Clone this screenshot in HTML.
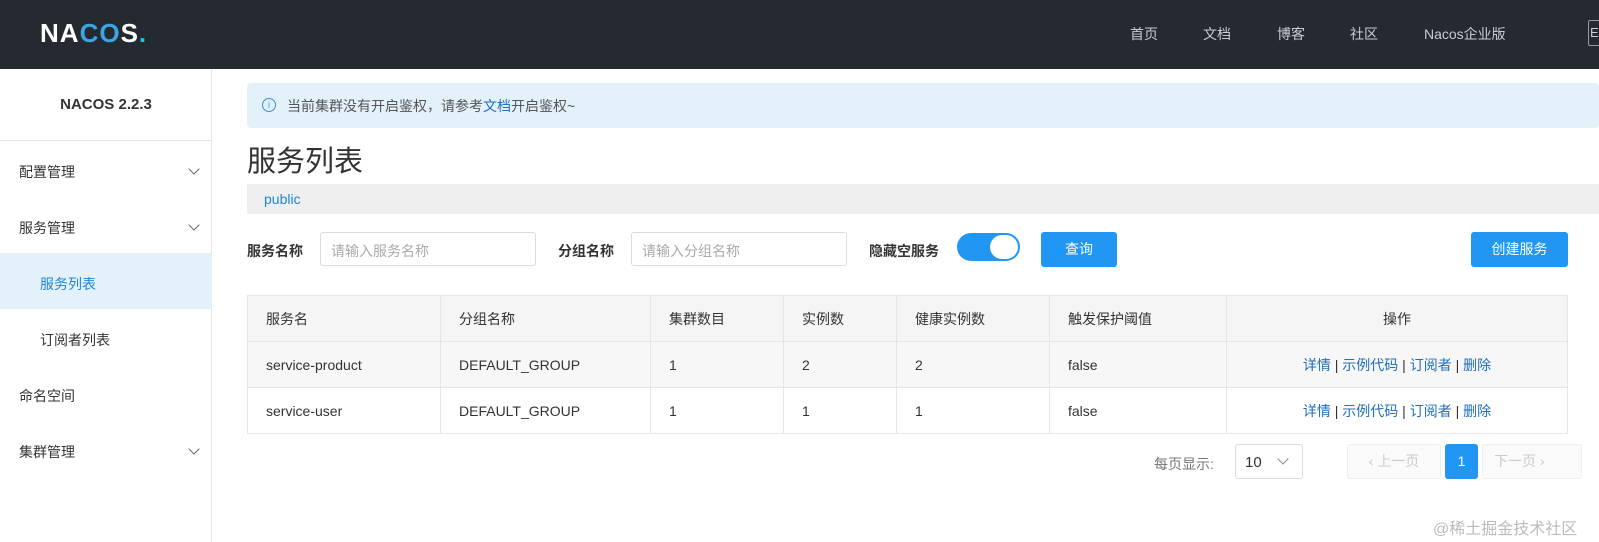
<!DOCTYPE html><html><head><meta charset="utf-8"><style>
*{box-sizing:border-box;margin:0;padding:0}
body{width:1599px;height:542px;overflow:hidden;background:#fff;font-family:"Liberation Sans","Noto Sans CJK SC",sans-serif;font-size:14px;color:#333;position:relative}
.a{position:absolute}
.hdr{left:0;top:0;width:1599px;height:69px;background:#252a31}
.nav{top:24px;color:#c9cbce;font-size:14px}
.side{left:0;top:69px;width:212px;height:473px;border-right:1px solid #e6e6e6}
.mi{left:19px;font-size:14px;color:#333}
.chev{position:absolute;width:8px;height:8px;border-right:1.3px solid #666;border-bottom:1.3px solid #666;transform:rotate(45deg)}
.inp{height:34px;border:1px solid #dcdcdc;border-radius:3px;color:#aaa;padding:8px 10px;font-size:14px}
.lbl{font-size:14px;color:#333;font-weight:bold}
table{border-collapse:collapse;position:absolute;left:247px;top:295px;width:1321px}
td{border:1px solid #e6e6e6;height:46px;padding-left:18px;font-size:14px;color:#333}
tr.h td{background:#f5f5f5}
tr.g td{background:#f7f7f7}
.op{color:#1f6ebd;text-align:center;padding:0}
.op span{color:#333}
</style></head><body>
<div class="a hdr"></div>
<div class="a" style="left:40px;top:18px;color:#fff;font-size:26px;font-weight:bold;letter-spacing:1px">NA<span style="color:#3aa6e6">CO</span>S<span style="color:#21c0e8">.</span></div>
<div class="a nav" style="left:1130px">首页</div>
<div class="a nav" style="left:1203px">文档</div>
<div class="a nav" style="left:1277px">博客</div>
<div class="a nav" style="left:1350px">社区</div>
<div class="a nav" style="left:1424px">Nacos企业版</div>
<div class="a" style="left:1588px;top:20px;width:14px;height:26px;border:1px solid #999;border-radius:2px;color:#ccc;font-size:13px;padding:4px 1px">E</div>
<div class="a side"></div>
<div class="a" style="left:0;top:96px;width:212px;text-align:center;font-weight:bold;font-size:15px;color:#333">NACOS 2.2.3</div>
<div class="a" style="left:0;top:140px;width:212px;border-top:1px solid #e6e6e6"></div>
<div class="a mi" style="top:162px">配置管理</div><div class="chev" style="left:190px;top:165px"></div>
<div class="a mi" style="top:218px">服务管理</div><div class="chev" style="left:190px;top:221px"></div>
<div class="a" style="left:0;top:253px;width:212px;height:56px;background:#e3f1fb"></div>
<div class="a mi" style="left:40px;top:274px;color:#1f86d6">服务列表</div>
<div class="a mi" style="left:40px;top:330px">订阅者列表</div>
<div class="a mi" style="top:386px">命名空间</div>
<div class="a mi" style="top:442px">集群管理</div><div class="chev" style="left:190px;top:445px"></div>
<div class="a" style="left:247px;top:83px;width:1352px;height:45px;background:#e3f1fb;border-radius:4px"></div>
<div class="a" style="left:262px;top:98px;width:14px;height:14px;border:1.3px solid #3b8fd9;border-radius:50%;color:#3b8fd9;font-size:9px;text-align:center;line-height:12px">i</div>
<div class="a" style="left:287px;top:96px;color:#555">当前集群没有开启鉴权，请参考<span style="color:#1f6ebd">文档</span>开启鉴权~</div>
<div class="a" style="left:247px;top:138px;font-size:29px;color:#333">服务列表</div>
<div class="a" style="left:247px;top:184px;width:1352px;height:30px;background:#efefef"></div>
<div class="a" style="left:264px;top:191px;color:#1f86d6;font-size:14px">public</div>
<div class="a lbl" style="left:247px;top:241px">服务名称</div>
<div class="a inp" style="left:320px;top:232px;width:216px">请输入服务名称</div>
<div class="a lbl" style="left:558px;top:241px">分组名称</div>
<div class="a inp" style="left:631px;top:232px;width:216px">请输入分组名称</div>
<div class="a lbl" style="left:869px;top:241px">隐藏空服务</div>
<div class="a" style="left:957px;top:233px;width:63px;height:28px;background:#2196f3;border-radius:14px"></div>
<div class="a" style="left:990px;top:235px;width:28px;height:24px;background:#fff;border-radius:12px"></div>
<div class="a" style="left:1041px;top:232px;width:76px;height:35px;background:#2196f3;border-radius:3px;color:#fff;text-align:center;line-height:35px">查询</div>
<div class="a" style="left:1471px;top:232px;width:97px;height:35px;background:#2196f3;border-radius:3px;color:#fff;text-align:center;line-height:35px">创建服务</div>
<table>
<tr class="h"><td style="width:193px">服务名</td><td style="width:210px">分组名称</td><td style="width:133px">集群数目</td><td style="width:113px">实例数</td><td style="width:153px">健康实例数</td><td style="width:177px">触发保护阈值</td><td style="text-align:center;padding:0">操作</td></tr>
<tr class="g"><td>service-product</td><td>DEFAULT_GROUP</td><td>1</td><td>2</td><td>2</td><td>false</td><td class="op">详情 <span>|</span> 示例代码 <span>|</span> 订阅者 <span>|</span> 删除</td></tr>
<tr><td>service-user</td><td>DEFAULT_GROUP</td><td>1</td><td>1</td><td>1</td><td>false</td><td class="op">详情 <span>|</span> 示例代码 <span>|</span> 订阅者 <span>|</span> 删除</td></tr>
</table>
<div class="a" style="left:1154px;top:454px;color:#777;font-size:14px">每页显示:</div>
<div class="a" style="left:1235px;top:444px;width:68px;height:35px;border:1px solid #dcdcdc;border-radius:3px;padding:9px 9px;font-size:15px">10</div>
<div class="chev" style="left:1279px;top:455px;border-color:#888"></div>
<div class="a" style="left:1347px;top:444px;width:94px;height:35px;border:1px solid #eee;background:#fafafa;border-radius:3px;color:#ccc;text-align:center;line-height:33px">‹ 上一页</div>
<div class="a" style="left:1445px;top:444px;width:33px;height:35px;background:#2196f3;border-radius:3px;color:#fff;text-align:center;line-height:35px">1</div>
<div class="a" style="left:1482px;top:444px;width:100px;height:35px;border:1px solid #eee;background:#fafafa;border-radius:3px;color:#ccc;padding-left:11px;line-height:33px">下一页 ›</div>
<div class="a" style="left:1433px;top:515px;color:#bbb;font-size:16px">@稀土掘金技术社区</div>
</body></html>
